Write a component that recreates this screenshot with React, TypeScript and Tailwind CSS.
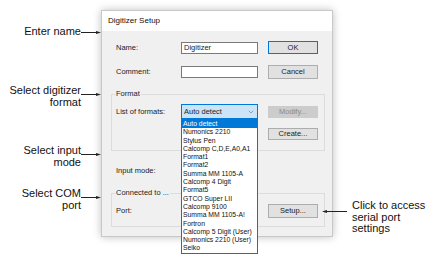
import { ChevronDown } from 'lucide-react';

const formats = [
  'Auto detect',
  'Numonics 2210',
  'Stylus Pen',
  'Calcomp C,D,E,A0,A1',
  'Format1',
  'Format2',
  'Summa MM 1105-A',
  'Calcomp 4 Digit',
  'Format5',
  'GTCO Super LII',
  'Calcomp 9100',
  'Summa MM 1105-A!',
  'Fortron',
  'Calcomp 5 Digit (User)',
  'Numonics 2210 (User)',
  'Seiko',
];

function Arrow({ dir = 'right', width = 20 }: { dir?: 'right' | 'left'; width?: number }) {
  return (
    <svg width={width} height="5" viewBox={`0 0 ${width} 5`} className="block">
      {dir === 'right' ? (
        <>
          <line x1="0" y1="2.5" x2={width - 3} y2="2.5" stroke="#222" strokeWidth="1" />
          <path d={`M${width - 5} 1 L${width} 2.5 L${width - 5} 4 Z`} fill="#222" />
        </>
      ) : (
        <>
          <line x1="3" y1="2.5" x2={width} y2="2.5" stroke="#222" strokeWidth="1" />
          <path d="M5 1 L0 2.5 L5 4 Z" fill="#222" />
        </>
      )}
    </svg>
  );
}

function LeftNote({ top, lines, arrowTop }: { top: number; lines: string[]; arrowTop: number }) {
  return (
    <div className="absolute left-0 w-[101px] flex" style={{ top }}>
      <div className="w-[81px] text-right text-[11px] leading-[12px] text-[#111]">
        {lines.map((l) => (
          <div key={l}>{l}</div>
        ))}
      </div>
      <div style={{ marginTop: arrowTop }}>
        <Arrow width={20} />
      </div>
    </div>
  );
}

function Btn({ children, primary, disabled, h = 13 }: { children: string; primary?: boolean; disabled?: boolean; h?: number }) {
  return (
    <div
      className={
        'w-[50px] flex items-center justify-center text-[7.5px] border ' +
        (disabled
          ? 'bg-[#cccccc] border-[#cccccc] text-[#8a8a8a]'
          : primary
            ? 'bg-[#e1e1e1] border-[#0078d7] text-[#222]'
            : 'bg-[#e1e1e1] border-[#adadad] text-[#222]')
      }
      style={{ height: h }}
    >
      {children}
    </div>
  );
}

function Group({ label, height, children }: { label: string; height: number; children?: React.ReactNode }) {
  return (
    <div className="relative w-[214px] border border-[#dcdcdc]" style={{ height }}>
      <span className="absolute -top-[6px] left-[3px] px-[1px] bg-[#f0f0f0] text-[7.5px] leading-[10px] text-[#222]">
        {label}
      </span>
      {children}
    </div>
  );
}

export default function App() {
  return (
    <div
      className="relative w-[439px] h-[266px] bg-white overflow-hidden"
      style={{ fontFamily: '"Liberation Sans", Arial, sans-serif' }}
    >
      <div className="pt-[10px] pl-[101px]">
        <div className="relative w-[232px] h-[227px] flex flex-col border border-[#c8c8c8] shadow-[0_0_8px_rgba(0,0,0,0.25)] text-[7.5px] text-[#222]">
          <div className="h-[20px] bg-white flex items-center pl-[6px] text-[8px] text-[#111]">Digitizer Setup</div>
          <div className="flex-1 bg-[#f0f0f0] px-[9px]">
            <div className="flex items-center mt-[10px] h-[13px] pl-[5px]">
              <div className="w-[65px]">Name:</div>
              <div className="w-[77px] h-[12px] bg-white border border-[#7a7a7a] flex items-center pl-[2px]">Digitizer</div>
              <div className="ml-[10px]">
                <Btn primary>OK</Btn>
              </div>
            </div>
            <div className="flex items-center mt-[11px] h-[14px] pl-[5px]">
              <div className="w-[65px]">Comment:</div>
              <div className="w-[77px] h-[12px] bg-white border border-[#7a7a7a]" />
              <div className="ml-[10px]">
                <Btn h={14}>Cancel</Btn>
              </div>
            </div>
            <div className="mt-[15px]">
              <Group label="Format" height={57}>
                <div className="flex items-center mt-[9px] pl-[4px] h-[15px]">
                  <div className="w-[65px]">List of formats:</div>
                  <div className="w-[77px] h-[15px] bg-[#cce4f7] border border-[#0078d7] flex items-center justify-between pl-[2px] pr-[2px]">
                    <span>Auto detect</span>
                    <ChevronDown size={8} strokeWidth={1.2} color="#333" />
                  </div>
                  <div className="ml-[10px]">
                    <Btn disabled h={12}>Modify...</Btn>
                  </div>
                </div>
                <div className="flex mt-[9px] pl-[156px]">
                  <Btn h={12}>Create...</Btn>
                </div>
              </Group>
            </div>
            <div className="flex items-center mt-[15px] h-[10px] pl-[5px]">Input mode:</div>
            <div className="mt-[17px]">
              <Group label="Connected to ..." height={34}>
                <div className="flex items-center mt-[10px] pl-[4px] h-[14px]">
                  <div className="w-[152px]">Port:</div>
                  <Btn h={14}>Setup...</Btn>
                </div>
              </Group>
            </div>
          </div>
          <div className="absolute left-[79px] top-[108px] w-[77px] h-[135px] bg-white border border-[#0078d7] text-[6.8px] leading-[8.3px]">
            {formats.map((f, i) => (
              <div
                key={f}
                className={'pl-[1px] whitespace-nowrap ' + (i === 0 ? 'bg-[#0078d7] text-white' : 'text-[#111]')}
              >
                {f}
              </div>
            ))}
          </div>
        </div>
      </div>

      <LeftNote top={25} lines={['Enter name']} arrowTop={5} />
      <LeftNote top={84} lines={['Select digitizer', 'format']} arrowTop={8} />
      <LeftNote top={144} lines={['Select input', 'mode']} arrowTop={8} />
      <LeftNote top={187} lines={['Select COM', 'port']} arrowTop={8} />

      <div className="absolute left-[322px] top-[200px] flex">
        <div className="mt-[9px]">
          <Arrow dir="left" width={25} />
        </div>
        <div className="ml-[5px] text-[11px] leading-[11.5px] text-[#111]">
          <div>Click to access</div>
          <div>serial port</div>
          <div>settings</div>
        </div>
      </div>
    </div>
  );
}
